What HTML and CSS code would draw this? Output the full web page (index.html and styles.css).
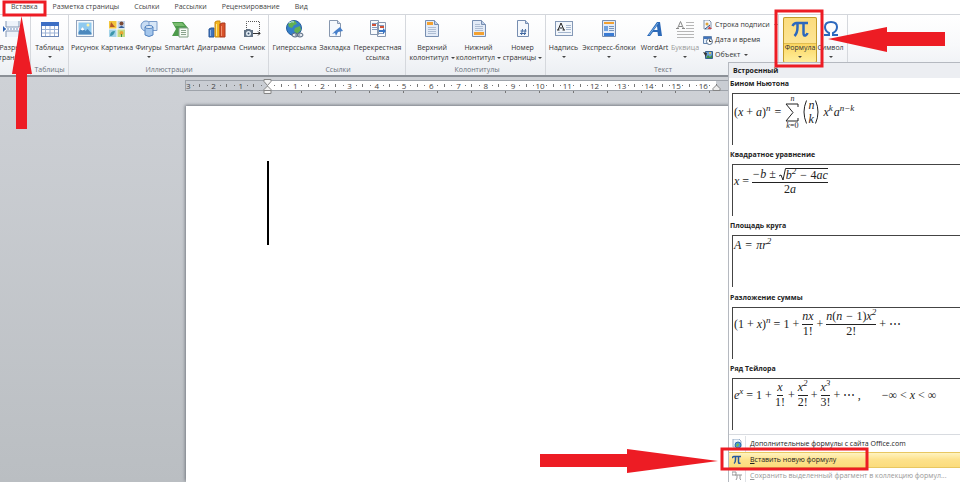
FILE: index.html
```html
<!DOCTYPE html>
<html lang="ru">
<head>
<meta charset="utf-8">
<title>Вставка формулы</title>
<link rel="stylesheet" href="styles.css">
</head>
<body>
<div class="app">
  <nav class="tabs">
    <a class="active" href="#insert">Вставка</a>
    <a href="#layout">Разметка страницы</a>
    <a href="#refs">Ссылки</a>
    <a href="#mail">Рассылки</a>
    <a href="#review">Рецензирование</a>
    <a href="#view">Вид</a>
  </nav>

  <div class="ribbon">
    <section class="group pages">
      <div class="tools">
        <button class="tool"><svg class="icon" viewBox="0 0 18 18"><path d="M3 1v6h13V1M3 17v-6h13v6" fill="#eef3fa" stroke="#8297b5"/><path d="M1 9h16" stroke="#6f8fc0" stroke-dasharray="2 1"/><path d="M0 6l3 3-3 3z" fill="#2c62b4"/></svg><span>Разрыв<br>страницы</span></button>
      </div>
    </section>

    <section class="group tables">
      <div class="tools">
        <button class="tool drop"><svg class="icon" viewBox="0 0 18 18"><rect x=".5" y="2.500" width="17" height="14" fill="#fff" stroke="#6a86b6"/><path d="M0 2h18v4H0z" fill="#3d6fc4"/><path d="M1 9.500h16M1 13h16M4.500 6v10M9 6v10M13.500 6v10" stroke="#9db3d6"/></svg><span>Таблица</span></button>
      </div>
      <h2>Таблицы</h2>
    </section>

    <section class="group illustrations">
      <div class="tools">
        <button class="tool"><svg class="icon" viewBox="0 0 18 18"><rect x=".5" y=".5" width="17" height="16" fill="#f6f9fc" stroke="#91a3bd"/><path d="M2.500 2.500h13v12h-13z" fill="#8ec9ef"/><circle cx="12" cy="5" r="1.500" fill="#fff3a8"/><path d="M2.500 12l4-5 3 4 2-2 4 4v1.500h-13z" fill="#4c88bd"/><path d="M4.500 9.500l2-2.500 2 2.500-2 1z" fill="#fff"/></svg><span>Рисунок</span></button>
        <button class="tool"><svg class="icon" viewBox="0 0 18 18"><path d="M1 1h7.500v7.500H1z" fill="#f2c53c"/><path d="M3 2l4 5H2z" fill="#b45628"/><path d="M9.500 1H17v7.500H9.500z" fill="#c3d2e6"/><circle cx="13.500" cy="3.500" r="2" fill="#7b4a35"/><path d="M10.500 8q3-4 6 0z" fill="#355f99"/><path d="M1 9.500h7.500V17H1z" fill="#a3d3e8"/><path d="M2 16q0-5 5-5-1 5-5 5z" fill="#3b95aa"/><path d="M9.500 9.500H17V17H9.500z" fill="#c3db85"/><circle cx="13.500" cy="13" r="2" fill="#e7a531"/><path d="M13.500 14v3" stroke="#479142"/></svg><span>Картинка</span></button>
        <button class="tool drop"><svg class="icon" viewBox="0 0 18 18"><circle cx="6" cy="6" r="5" fill="#c8dcf3" stroke="#6b93c7"/><path d="M9 1.500h8v9H9z" fill="#d8e7f7" stroke="#7c9dca"/><path d="M5 7v8q4 3 8 0V7" fill="#a4c6ec" stroke="#5584c0"/><ellipse cx="9" cy="7" rx="4" ry="1.500" fill="#e5f0fb" stroke="#5584c0"/></svg><span>Фигуры</span></button>
        <button class="tool"><svg class="icon" viewBox="0 0 18 18"><path d="M1 2h11l5 6v8H1l4-7z" fill="#4d9b4c"/><path d="M2 3h9l3 3H4z" fill="#7abd70"/><path d="M8 8h9v9H8z" fill="#f5faf4" stroke="#819f85"/><path d="M10 10.500h5M10 12.500h5M10 14.500h5" stroke="#89a28c"/></svg><span>SmartArt</span></button>
        <button class="tool"><svg class="icon" viewBox="0 0 18 18"><path d="M1 9l2-1h3v9H1z" fill="#3f73bd" stroke="#295798"/><path d="M7 2l2-1h3v16H7z" fill="#f4b71f" stroke="#c88612"/><path d="M12 4l2-1h3v14h-5z" fill="#d9522a" stroke="#a9381e"/><path d="M2.500 10v6" stroke="#8db6e6"/><path d="M8.500 4v12" stroke="#ffe591"/><path d="M13.500 6v10" stroke="#f3916e"/></svg><span>Диаграмма</span></button>
        <button class="tool drop"><svg class="icon" viewBox="0 0 18 18"><path d="M3.500 10V1.500h13v12h-4" fill="none" stroke="#555" stroke-dasharray="1 1"/><path d="M10 13.500h7M15 11.500l2 2-2 2" fill="none" stroke="#333"/><path d="M1 10h2l1-1h3l1 1h2v7H1z" fill="#627386"/><circle cx="5.500" cy="13.500" r="2.500" fill="#e4eef6"/><circle cx="5.500" cy="13.500" r="1" fill="#354b66"/></svg><span>Снимок</span></button>
      </div>
      <h2>Иллюстрации</h2>
    </section>

    <section class="group links">
      <div class="tools">
        <button class="tool"><svg class="icon" viewBox="0 0 18 18"><circle cx="8" cy="8" r="7.500" fill="#347fc9" stroke="#285e9d"/><path d="M2 4q4-4 7-3l2 3-3 1-2 3-3-1zM9 8l5-2 1 4-4 4-3-3z" fill="#62b052"/><path d="M3 3q3-2 5-1" stroke="#bfe4f8" fill="none"/><ellipse cx="9" cy="15" rx="3" ry="2" fill="#dfe5ed" stroke="#52647b"/><ellipse cx="14" cy="15" rx="3" ry="2" fill="#dfe5ed" stroke="#52647b"/><path d="M9 15h5" stroke="#52647b"/></svg><span>Гиперссылка</span></button>
        <button class="tool"><svg class="icon" viewBox="0 0 18 18"><path d="M3.500.5h8l3 3v13h-11z" fill="#f5f8fc" stroke="#8797af"/><path d="M11.500.5v3h3" fill="#d0daea" stroke="#8797af"/><path d="M9 11l5-4 3 4-5 1-2 4-1-3-3 1z" fill="#477fca"/></svg><span>Закладка</span></button>
        <button class="tool"><svg class="icon" viewBox="0 0 18 18"><path d="M1.500.5h8v14h-8zM8.500 2.500h8v14h-8z" fill="#f8fafc" stroke="#8797af"/><path d="M3 3.500h5M3 7.500h5M3 9.500h5M10 5.500h5M10 13.500h5" stroke="#879cbe"/><path d="M3 4h4v2H3zM11 6h4v2h-4z" fill="#cf5137"/><path d="M10 10h4V8l3 3-3 3v-2h-4z" fill="#3875c5"/></svg><span>Перекрестная<br>ссылка</span></button>
      </div>
      <h2>Ссылки</h2>
    </section>

    <section class="group headers">
      <div class="tools">
        <button class="tool"><svg class="icon" viewBox="0 0 18 18"><path d="M2.500.5h9l4 4v12h-13z" fill="#e3ebf7" stroke="#778eb1"/><path d="M11.500.5v4h4" fill="#bdcee8" stroke="#778eb1"/><path d="M4 2h6v3H4z" fill="#f3a131"/><path d="M5 7.500h8M5 9.500h8M5 11.500h8M5 13.500h8" stroke="#aebdd3"/></svg><span>Верхний<br>колонтитул<i class="arrow"></i></span></button>
        <button class="tool"><svg class="icon" viewBox="0 0 18 18"><path d="M2.500.5h9l4 4v12h-13z" fill="#e3ebf7" stroke="#778eb1"/><path d="M11.500.5v4h4" fill="#bdcee8" stroke="#778eb1"/><path d="M4 12h10v3H4z" fill="#f3a131"/><path d="M5 4.500h5M5 6.500h8M5 8.500h8M5 10.500h8" stroke="#aebdd3"/></svg><span>Нижний<br>колонтитул<i class="arrow"></i></span></button>
        <button class="tool"><svg class="icon" viewBox="0 0 18 18"><path d="M3.500.5h8l3 3v13h-11z" fill="#f5f8fc" stroke="#778eb1"/><path d="M11.500.5v3h3" fill="#bdcee8" stroke="#778eb1"/><path d="M8.500 9l-1 6M11.500 9l-1 6M6.500 11h6M6 13.500h6" stroke="#3e669f"/></svg><span>Номер<br>страницы<i class="arrow"></i></span></button>
      </div>
      <h2>Колонтитулы</h2>
    </section>

    <section class="group text">
      <div class="tools">
        <button class="tool drop"><svg class="icon" viewBox="0 0 18 18"><rect x=".5" y="1.500" width="17" height="14" fill="#f2f6fb" stroke="#8498b6"/><path d="M3 10l3-7 3 7M4.500 8h3M2 10h2.500M7.500 10H10" fill="none" stroke="#222"/><path d="M11 5.500h5M11 7.500h5M11 9.500h5M3 12.500h13" stroke="#a5b6ce"/></svg><span>Надпись</span></button>
        <button class="tool drop"><svg class="icon" viewBox="0 0 18 18"><path d="M2.500.5h13v16h-13z" fill="#e3ebf7" stroke="#778eb1"/><path d="M4 2h10v2H4z" fill="#f3a131"/><path d="M4 13h10v3H4z" fill="#397ad3"/><path d="M4 6h4v5H4z" fill="#6ea0df"/><path d="M9 6.500h5M9 8.500h5M9 10.500h5" stroke="#7894ba"/></svg><span>Экспресс-блоки</span></button>
        <button class="tool drop"><svg class="icon" viewBox="0 0 18 18"><path d="M11 2h3l2 14h-4l-.5-4H7l-3 4H1zM11 6l-3 4h3.500z" fill="#2c69b8" fill-rule="evenodd"/><path d="M3 15L12 3" stroke="#76afe5"/></svg><span>WordArt</span></button>
        <button class="tool drop" disabled><svg class="icon" viewBox="0 0 18 18"><path d="M1.500 8.500l3-7 3 7M3 6.500h3M0 8.500h3M6 8.500h3" fill="none" stroke="#888"/><path d="M10 2.500h8M10 5.500h8M10 8.500h8M1 11.500h17M1 14.500h17M1 17.500h17" stroke="#b6b6b6"/></svg><span>Буквица</span></button>
        <div class="stack">
          <button><svg class="small-icon" viewBox="0 0 10 10"><path d="M1 0h5l2 2v7H1z" fill="#f4f6fa" stroke="#8193ad"/><circle cx="4" cy="4" r="1.500" fill="#dca43a"/><path d="M5 9l1-3 3 3z" fill="#c44"/><path d="M2 9l5-4" stroke="#244f85"/></svg>Строка подписи<i class="arrow"></i></button>
          <button><svg class="small-icon" viewBox="0 0 10 10"><path d="M.5 1.500h8v7h-8z" fill="#e4effa" stroke="#6384ae"/><path d="M1 3h7" stroke="#3f73bd" stroke-width="2"/><circle cx="6.500" cy="6.500" r="3" fill="#fff" stroke="#546f91"/><path d="M6.500 4.500v2h2" fill="none" stroke="#333"/></svg>Дата и время</button>
          <button><svg class="small-icon" viewBox="0 0 10 10"><path d="M2.500 1.500h7v7h-7z" fill="#6ba1d6" stroke="#38628f"/><path d="M0 2l4 1-1 4z" fill="#333"/><path d="M3 8l2-3 2 2 2-2v3z" fill="#429044"/><circle cx="7" cy="3" r="1" fill="#f1cc45"/></svg>Объект<i class="arrow"></i></button>
        </div>
      </div>
      <h2>Текст</h2>
    </section>

    <section class="group symbols">
      <div class="tools">
        <button class="tool drop selected"><svg class="icon" viewBox="0 0 18 18"><path d="M1.500 6Q3 3 5.500 3H17M6.500 3v4q0 6-3 9M12.500 3v10q0 3 2 2.500 1.500-.5 2-2.500" fill="none" stroke="#2c68bd" stroke-width="2.500"/></svg><span>Формула</span></button>
        <button class="tool drop"><svg class="icon" viewBox="0 0 18 18"><path d="M2 15h5v-2Q3 11 3 7q0-5 6-5t6 5q0 4-4 6v2h5" fill="none" stroke="#2c68bd" stroke-width="2"/></svg><span>Символ</span></button>
      </div>
    </section>
  </div>

  <main class="workspace">
    <div class="ruler">
      <div class="scale">
        <span class="first">3</span><span>2</span><span>1</span><span></span><span>1</span><span>2</span><span>3</span><span>4</span><span>5</span><span>6</span><span>7</span><span>8</span><span>9</span><span>10</span><span>11</span><span>12</span><span>13</span><span>14</span><span>15</span><span>16</span>
      </div>
      <svg class="indent left-indent" viewBox="0 0 9 16"><path d="M1 .5h7v2l-3.500 4L1 2.500zM1 10.500l3.500-3.500L8 10.500v4H1zM1 11.500h7" fill="#f3f3f3" stroke="#858585"/></svg>
      <svg class="indent right-indent" viewBox="0 0 9 16"><path d="M1 11.500v-2l3.500-3.500L8 9.500v2z" fill="#eee" stroke="#858585"/></svg>
    </div>
    <div class="tab-stops"></div>
    <article class="sheet"><div class="caret"></div></article>
  </main>

  <aside class="menu">
    <h2>Встроенный</h2>
    <div class="gallery">
      <section>
        <h3>Бином Ньютона</h3>
        <div class="formula">
          <span><b>(</b>x <b>+</b> a<b>)</b><sup>n</sup></span><b>=</b>
          <span class="sum"><small>n</small><svg viewBox="0 0 14 19"><path d="M13 4V1H1l7 8.500L1 18h12v-3" fill="none" stroke="#222"/></svg><small>k<b>=0</b></small></span>
          <span class="binom"><svg viewBox="0 0 4 24"><path d="M3.500.5q-5 11.500 0 23" fill="none" stroke="#222"/></svg><span class="pair"><span>n</span><span>k</span></span><svg viewBox="0 0 4 24"><path d="M.5.5q5 11.500 0 23" fill="none" stroke="#222"/></svg></span>
          <span>x<sup>k</sup>&#8202;a<sup>n−k</sup></span>
        </div>
      </section>
      <section>
        <h3>Квадратное уравнение</h3>
        <div class="formula raised">
          <span>x</span><b>=</b>
          <span class="frac"><span class="root-line"><span>−b</span><b>±</b><span class="root"><svg class="radical" viewBox="0 0 7 13"><path d="M0 8l2-1 2 5L6.500.5H7" fill="none" stroke="#222"/></svg><span class="radicand">b<sup>2</sup> − <b>4</b>ac</span></span></span><span><b>2</b>a</span></span>
        </div>
      </section>
      <section>
        <h3>Площадь круга</h3>
        <div class="formula short"><span>A</span><b>=</b><span>πr<sup>2</sup></span></div>
      </section>
      <section>
        <h3>Разложение суммы</h3>
        <div class="formula raised">
          <span><b>(1 +</b> x<b>)</b><sup>n</sup></span><b>=</b><b>1</b><b>+</b>
          <span class="frac"><span>nx</span><b>1!</b></span><b>+</b>
          <span class="frac"><span>n<b>(</b>n − <b>1)</b>x<sup>2</sup></span><b>2!</b></span><b>+</b><b>⋯</b>
        </div>
      </section>
      <section>
        <h3>Ряд Тейлора</h3>
        <div class="formula raised">
          <span>e<sup>x</sup></span><b>=</b><b>1</b><b>+</b>
          <span class="frac"><span>x</span><b>1!</b></span><b>+</b>
          <span class="frac"><span>x<sup>2</sup></span><b>2!</b></span><b>+</b>
          <span class="frac"><span>x<sup>3</sup></span><b>3!</b></span><b>+</b><b>⋯&#8201;,</b>
          <span class="range"><b>−∞ &lt;</b> x <b>&lt; ∞</b></span>
        </div>
      </section>
    </div>
    <div class="actions">
      <button><svg class="small-icon" viewBox="0 0 10 10"><path d="M1 0h6l2 2v6H1z" fill="#eef4fb" stroke="#9aafc9"/><circle cx="6" cy="6" r="3" fill="#4b9bd7" stroke="#2b6dab"/><path d="M4 6l2-2 1 2-2 2z" fill="#79bd4a"/></svg><span>Дополнительные формулы с сайта Office.com</span></button>
      <button class="highlight"><svg class="small-icon" viewBox="0 0 10 10"><path d="M0 3q1-1.500 2-1.500h7M3.500 1.500v3q0 3-1.500 4M6.500 1.500V7q0 2 2 1" fill="none" stroke="#25579d" stroke-width="1.500"/></svg><span><u>В</u>ставить новую формулу</span></button>
      <button disabled><svg class="small-icon" viewBox="0 0 10 10"><path d="M3 4h7M5 4v3l-1 2M8 4v4l1 1M0 1h4v3H0z" fill="none" stroke="#999"/></svg><span><u>С</u>охранить выделенный фрагмент в коллекцию формул...</span></button>
    </div>
  </aside>

  <svg class="notes" viewBox="0 0 960 482" aria-hidden="true">
    <g fill="#ed1c24">
      <path d="M21.500 16L32 74h-5v55H16V74h-4z"/>
      <path d="M828 39l59-12v5h58v14h-58v6z"/>
      <path d="M718 461l-91-12v5h-87v13h87v6z"/>
    </g>
    <g fill="none" stroke="#ed1c24" stroke-width="3">
      <rect x="4" y="2" width="41" height="13"/>
      <rect x="776" y="11" width="46" height="55"/>
      <rect x="722" y="449" width="145" height="20"/>
    </g>
  </svg>
</div>
</body>
</html>
```
FILE: styles.css
```css
* { box-sizing: border-box; }

body {
  margin: 0;
  font-family: "Open Sans", "Noto Sans", sans-serif;
  font-size: 7px;
  line-height: 10px;
  color: #333;
}

h2, h3 { margin: 0; font-size: inherit; }

button {
  margin: 0;
  padding: 0;
  border: 0;
  background: none;
  font: inherit;
  color: inherit;
  white-space: nowrap;
}

button:disabled { color: #999; }

.app {
  position: relative;
  display: flex;
  flex-direction: column;
  height: 100vh;
  overflow: hidden;
  background: #fff;
}

.tabs {
  display: flex;
  gap: 15px;
  height: 14px;
  padding: 2px 11px;
}

.tabs a { color: #444; text-decoration: none; }

.ribbon {
  display: flex;
  height: 63px;
  border-top: 1px solid #d3d6db;
  border-bottom: 2px solid #8b9097;
  background: linear-gradient(#fff, #f8f9fb 50%, #eceff3);
}

.group {
  display: flex;
  flex-direction: column;
  flex: none;
  padding-top: 5px;
  border-right: 1px solid #d5d8dd;
}

.group h2 {
  font-weight: 400;
  text-align: center;
  color: #6a707a;
}

.tools { display: grid; height: 45px; }

.pages { width: 31px; }
.pages .tools { grid-template-columns: 24px; }
.tables { width: 38px; }
.illustrations { width: 200px; padding-left: 1px; }
.illustrations .tools { grid-template-columns: 30px 34px 29px 33px 41px 30px; }
.links { width: 137px; padding-left: 2px; }
.links .tools { grid-template-columns: 47px 34px 51px; }
.headers { width: 140px; padding-left: 3px; }
.headers .tools { grid-template-columns: 46px 47px 41px; }
.text { width: 233px; padding-left: 2px; }
.text .tools { grid-template-columns: 31px 60px 31px 30px 1fr; }
.symbols { width: 69px; padding-left: 4px; }
.symbols .tools { grid-template-columns: 34px 27px; }

.tool {
  display: flex;
  flex-direction: column;
  align-items: center;
  gap: 5px;
}

.icon { width: 18px; height: 18px; flex: none; }
.small-icon { width: 10px; height: 10px; flex: none; }

.arrow, .drop::after {
  display: inline-block;
  border: 2px solid transparent;
  border-top-color: #444;
  border-bottom: 0;
}

.drop::after { content: ""; margin-top: -2px; }
.arrow { margin-left: 2px; vertical-align: middle; }

.selected {
  height: 46px;
  margin-top: -3px;
  padding-top: 3px;
  border-radius: 2px;
  box-shadow: inset 0 0 0 1px #c29b29;
  background: linear-gradient(#fbdb7c, #fde594 26px, #c9a43b 26px, #fbd662 27px, #fff0a0);
}

.stack {
  display: flex;
  flex-direction: column;
  gap: 5px;
  padding-left: 3px;
}

.stack button { display: flex; align-items: center; gap: 2px; }

.workspace {
  display: flex;
  flex-direction: column;
  flex: 1;
  padding: 3px 0 0 185px;
  background: linear-gradient(#ced1d6, #babec2);
}

.ruler {
  position: relative;
  height: 11px;
  border: 1px solid #9ea3aa;
  border-right: 0;
  background: linear-gradient(90deg, #c9cdd3 82px, #fff 82px, #fff 530px, #c9cdd3 530px);
}

.scale {
  display: grid;
  grid-template-columns: 14px repeat(19, 1fr);
  width: 531px;
  font-size: 8px;
  line-height: 9px;
  text-align: center;
  color: #444;
}

.scale span {
  height: 9px;
  background:
    linear-gradient(#777, #777) 25% 50% / 1px 1px no-repeat,
    linear-gradient(#777, #777) 75% 50% / 1px 1px no-repeat,
    linear-gradient(#777, #777) 100% 50% / 1px 3px no-repeat;
}

.scale .first {
  text-align: left;
  background:
    linear-gradient(#777, #777) 50% 50% / 1px 1px no-repeat,
    linear-gradient(#777, #777) 100% 50% / 1px 3px no-repeat;
}

.indent { position: absolute; top: -2px; width: 9px; height: 16px; }
.left-indent { left: 77px; }
.right-indent { left: 526px; }

.tab-stops {
  height: 2px;
  margin-left: 116px;
  background: repeating-linear-gradient(90deg, #777 0 1px, transparent 1px 34px);
}

.sheet {
  flex: 1;
  margin: 13px 0 0 1px;
  padding: 55px 81px;
  background: #fff;
  box-shadow: -1px -1px 3px #777c84;
}

.caret { width: 2px; height: 84px; background: #000; }

.menu {
  position: absolute;
  top: 62px;
  right: 0;
  bottom: 0;
  width: 232px;
  border: 1px solid #b5b9c0;
  border-width: 1px 0 0 1px;
  background: #fff;
  color: #222;
}

.menu > h2 {
  height: 15px;
  padding: 3px 4px;
  background: #eceef2;
}

.gallery {
  display: grid;
  grid-template-rows: repeat(5, 1fr);
  height: 356px;
}

.gallery h3 { padding: 1px 1px 4px; }

.formula {
  display: flex;
  align-items: center;
  gap: 4px;
  height: 52px;
  margin-left: 3px;
  padding: 0 1px 15px;
  border: 1px solid #444;
  border-width: 1px 0 0 1px;
  font: italic 12px/12px "Liberation Serif", serif;
  white-space: nowrap;
}

.formula.raised { gap: 3px; padding-bottom: 19px; }
.formula.short { padding-bottom: 34px; }
.formula b { font-weight: 400; font-style: normal; }
.formula sup { font-size: 9px; line-height: 0; }

.sum, .frac { display: flex; flex-direction: column; align-items: center; }
.sum small { font-size: 8px; line-height: 8px; }
.sum svg { width: 14px; height: 19px; }
.binom { display: flex; align-items: center; }
.binom svg { width: 4px; height: 24px; }
.pair { display: flex; flex-direction: column; padding: 0 1px; line-height: 14px; }
.frac > :first-child { padding-bottom: 1px; border-bottom: 1px solid #222; line-height: 13px; }
.root-line { display: flex; gap: 3px; }
.root { display: flex; }
.radical { width: 7px; height: 13px; }
.radicand { border-top: 1px solid #222; line-height: 12px; }
.range { margin-left: 18px; }

.actions { padding-top: 1px; border-top: 1px solid #d8dbe0; }

.actions button {
  display: flex;
  align-items: center;
  gap: 8px;
  width: 100%;
  height: 16px;
  padding-left: 3px;
  background: linear-gradient(90deg, transparent 16px, #dfe2e6 16px, #dfe2e6 17px, transparent 17px);
}

.actions .highlight {
  border: 1px solid #e8c761;
  border-width: 1px 0;
  background: linear-gradient(#fff3c0, #fde18a 50%, #fbdc7c);
}

.notes {
  position: absolute;
  top: 0;
  left: 0;
  width: 960px;
  height: 482px;
  pointer-events: none;
}
```
